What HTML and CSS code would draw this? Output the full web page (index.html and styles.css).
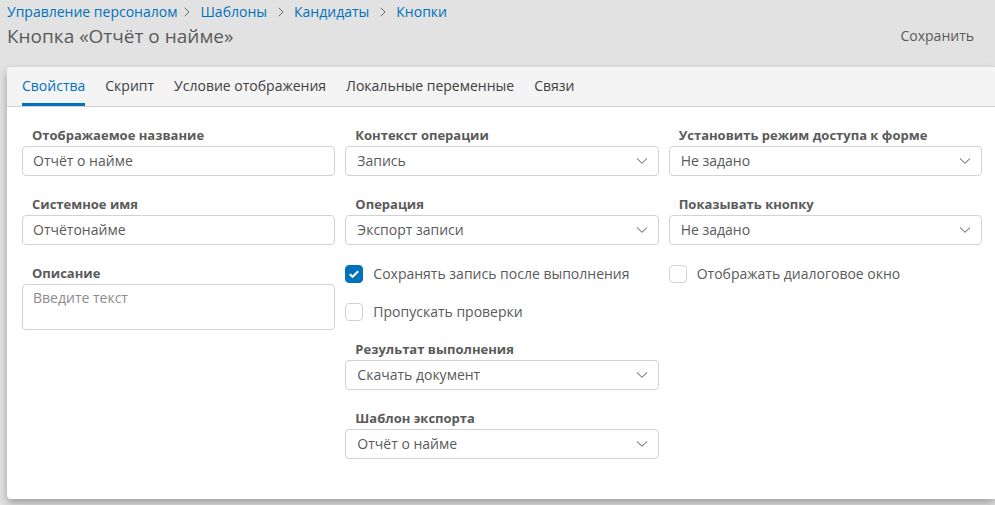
FILE: index.html
```html
<!DOCTYPE html>
<html lang="ru">
<head>
<meta charset="utf-8">
<meta name="viewport" content="width=device-width, initial-scale=1">
<title>Кнопка «Отчёт о найме»</title>
<link rel="stylesheet" href="styles.css">
</head>
<body>
<svg class="sprite" aria-hidden="true">
  <symbol id="chevron-down" viewBox="0 0 12 8"><path d="M1 1.5 6 6.3 11 1.5"/></symbol>
  <symbol id="chevron-right" viewBox="0 0 6 10"><path d="M.8.8 5 5 .8 9.2"/></symbol>
</svg>

<header class="header">
  <nav class="breadcrumbs" aria-label="Навигация">
    <a class="crumb crumb-root" href="#">Управление персоналом</a>
    <svg class="crumb-sep" aria-hidden="true"><use href="#chevron-right"/></svg>
    <a class="crumb" href="#">Шаблоны</a>
    <svg class="crumb-sep" aria-hidden="true"><use href="#chevron-right"/></svg>
    <a class="crumb" href="#">Кандидаты</a>
    <svg class="crumb-sep" aria-hidden="true"><use href="#chevron-right"/></svg>
    <a class="crumb" href="#">Кнопки</a>
  </nav>
  <div class="title-row">
    <h1 class="title">Кнопка «Отчёт о найме»</h1>
    <button class="save" type="submit" form="properties">Сохранить</button>
  </div>
</header>

<main class="card">
  <nav class="tabs" aria-label="Разделы">
    <a class="tab tab-active" href="#" aria-current="page">Свойства</a>
    <a class="tab" href="#">Скрипт</a>
    <a class="tab" href="#">Условие отображения</a>
    <a class="tab" href="#">Локальные переменные</a>
    <a class="tab" href="#">Связи</a>
  </nav>

  <form class="form" id="properties">
    <div class="column">
      <div class="field">
        <label class="label" for="display-name">Отображаемое название</label>
        <input class="control control-text" id="display-name" type="text" value="Отчёт о найме">
      </div>
      <div class="field">
        <label class="label" for="system-name">Системное имя</label>
        <input class="control control-text" id="system-name" type="text" value="Отчётонайме">
      </div>
      <div class="field">
        <label class="label" for="description">Описание</label>
        <textarea class="control control-area" id="description" placeholder="Введите текст"></textarea>
      </div>
    </div>

    <div class="column">
      <div class="field">
        <label class="label" for="context">Контекст операции</label>
        <div class="select">
          <select class="control" id="context"><option>Запись</option></select>
          <svg class="select-icon" aria-hidden="true"><use href="#chevron-down"/></svg>
        </div>
      </div>
      <div class="field">
        <label class="label" for="operation">Операция</label>
        <div class="select">
          <select class="control" id="operation"><option>Экспорт записи</option></select>
          <svg class="select-icon" aria-hidden="true"><use href="#chevron-down"/></svg>
        </div>
      </div>
      <label class="check"><input class="checkbox" type="checkbox" checked><svg class="check-mark" viewBox="0 0 18 18" aria-hidden="true"><path d="M4.8 9.2 7.6 11.8 13.2 6.2"/></svg><span>Сохранять запись после выполнения</span></label>
      <label class="check"><input class="checkbox" type="checkbox"><span>Пропускать проверки</span></label>
      <div class="field">
        <label class="label" for="result">Результат выполнения</label>
        <div class="select">
          <select class="control" id="result"><option>Скачать документ</option></select>
          <svg class="select-icon" aria-hidden="true"><use href="#chevron-down"/></svg>
        </div>
      </div>
      <div class="field">
        <label class="label" for="template">Шаблон экспорта</label>
        <div class="select">
          <select class="control" id="template"><option>Отчёт о найме</option></select>
          <svg class="select-icon" aria-hidden="true"><use href="#chevron-down"/></svg>
        </div>
      </div>
    </div>

    <div class="column">
      <div class="field">
        <label class="label" for="access">Установить режим доступа к форме</label>
        <div class="select">
          <select class="control" id="access"><option>Не задано</option></select>
          <svg class="select-icon" aria-hidden="true"><use href="#chevron-down"/></svg>
        </div>
      </div>
      <div class="field">
        <label class="label" for="visibility">Показывать кнопку</label>
        <div class="select">
          <select class="control" id="visibility"><option>Не задано</option></select>
          <svg class="select-icon" aria-hidden="true"><use href="#chevron-down"/></svg>
        </div>
      </div>
      <label class="check"><input class="checkbox" type="checkbox"><span>Отображать диалоговое окно</span></label>
    </div>
  </form>
</main>
</body>
</html>
```
FILE: styles.css
```css
* {
  box-sizing: border-box;
}

body {
  margin: 0;
  background: #e2e2e2;
  color: #5a5a5a;
  font: 14px/20px "Open Sans", "Noto Sans", sans-serif;
}

.sprite {
  display: none;
}

.header {
  padding: 2px 13px 0 7px;
}

.breadcrumbs {
  display: flex;
  align-items: center;
  gap: 10px;
}

.crumb {
  color: #0072bc;
  text-decoration: none;
}

.crumb-root {
  margin-right: -4px;
}

.crumb-sep {
  width: 6px;
  height: 10px;
  margin-left: 1px;
  fill: none;
  stroke: #666;
}

.title-row {
  display: flex;
  align-items: center;
  justify-content: space-between;
  height: 28px;
}

.title {
  margin: 0;
  font-size: 19px;
  font-weight: 400;
  line-height: 28px;
}

.save {
  padding: 0 8px;
  border: 0;
  background: none;
  color: inherit;
  font: inherit;
}

.card {
  margin: 17px 0 6px 7px;
  border-radius: 4px 0 0 4px;
  background: #fff;
  box-shadow: 0 4px 8px rgba(0, 0, 0, 0.3);
}

.tabs {
  display: flex;
  gap: 20px;
  height: 40px;
  padding: 0 15px;
  border-bottom: 1px solid #d2d2d2;
  border-radius: 4px 0 0;
  background: #f4f4f4;
}

.tab {
  border-bottom: 3px solid transparent;
  color: #404040;
  line-height: 38px;
  text-decoration: none;
}

.tab-active {
  border-color: #0072bc;
  color: #0072bc;
}

.form {
  display: grid;
  grid-template-columns: repeat(3, 1fr);
  gap: 10px;
  padding: 19px 13px 40px 15px;
}

.column {
  display: flex;
  flex-direction: column;
  gap: 19px;
  min-width: 0;
}

.field {
  display: flex;
  flex-direction: column;
}

.label {
  padding: 0 0 2px 10px;
  font-size: 13px;
  font-weight: 700;
  line-height: 18px;
}

.control {
  display: block;
  width: 100%;
  height: 30px;
  margin: 0;
  padding: 0 10px;
  border: 1px solid #d2d2d2;
  border-radius: 4px;
  background: #fff;
  color: inherit;
  font: inherit;
  appearance: none;
}

.control-text {
  padding-bottom: 2px;
}

.control-area {
  height: 46px;
  padding-top: 3px;
  resize: none;
}

.control::placeholder {
  color: #8c8c8c;
}

.select {
  position: relative;
}

.select .control {
  padding: 0 32px 0 11px;
}

.select-icon {
  position: absolute;
  top: 11px;
  right: 11px;
  width: 12px;
  height: 8px;
  fill: none;
  stroke: #555;
  pointer-events: none;
}

.check {
  position: relative;
  display: flex;
  align-items: center;
  gap: 10px;
  height: 19px;
  padding-top: 1px;
}

.checkbox {
  width: 18px;
  height: 18px;
  margin: 0;
  border: 1px solid #d2d2d2;
  border-radius: 4px;
  background: #fff;
  appearance: none;
}

.checkbox:checked {
  border-color: #0072bc;
  background: #0072bc;
}

.check-mark {
  position: absolute;
  top: 1px;
  left: 0;
  width: 18px;
  height: 18px;
  fill: none;
  stroke: #fff;
  stroke-width: 2;
  pointer-events: none;
}
```
